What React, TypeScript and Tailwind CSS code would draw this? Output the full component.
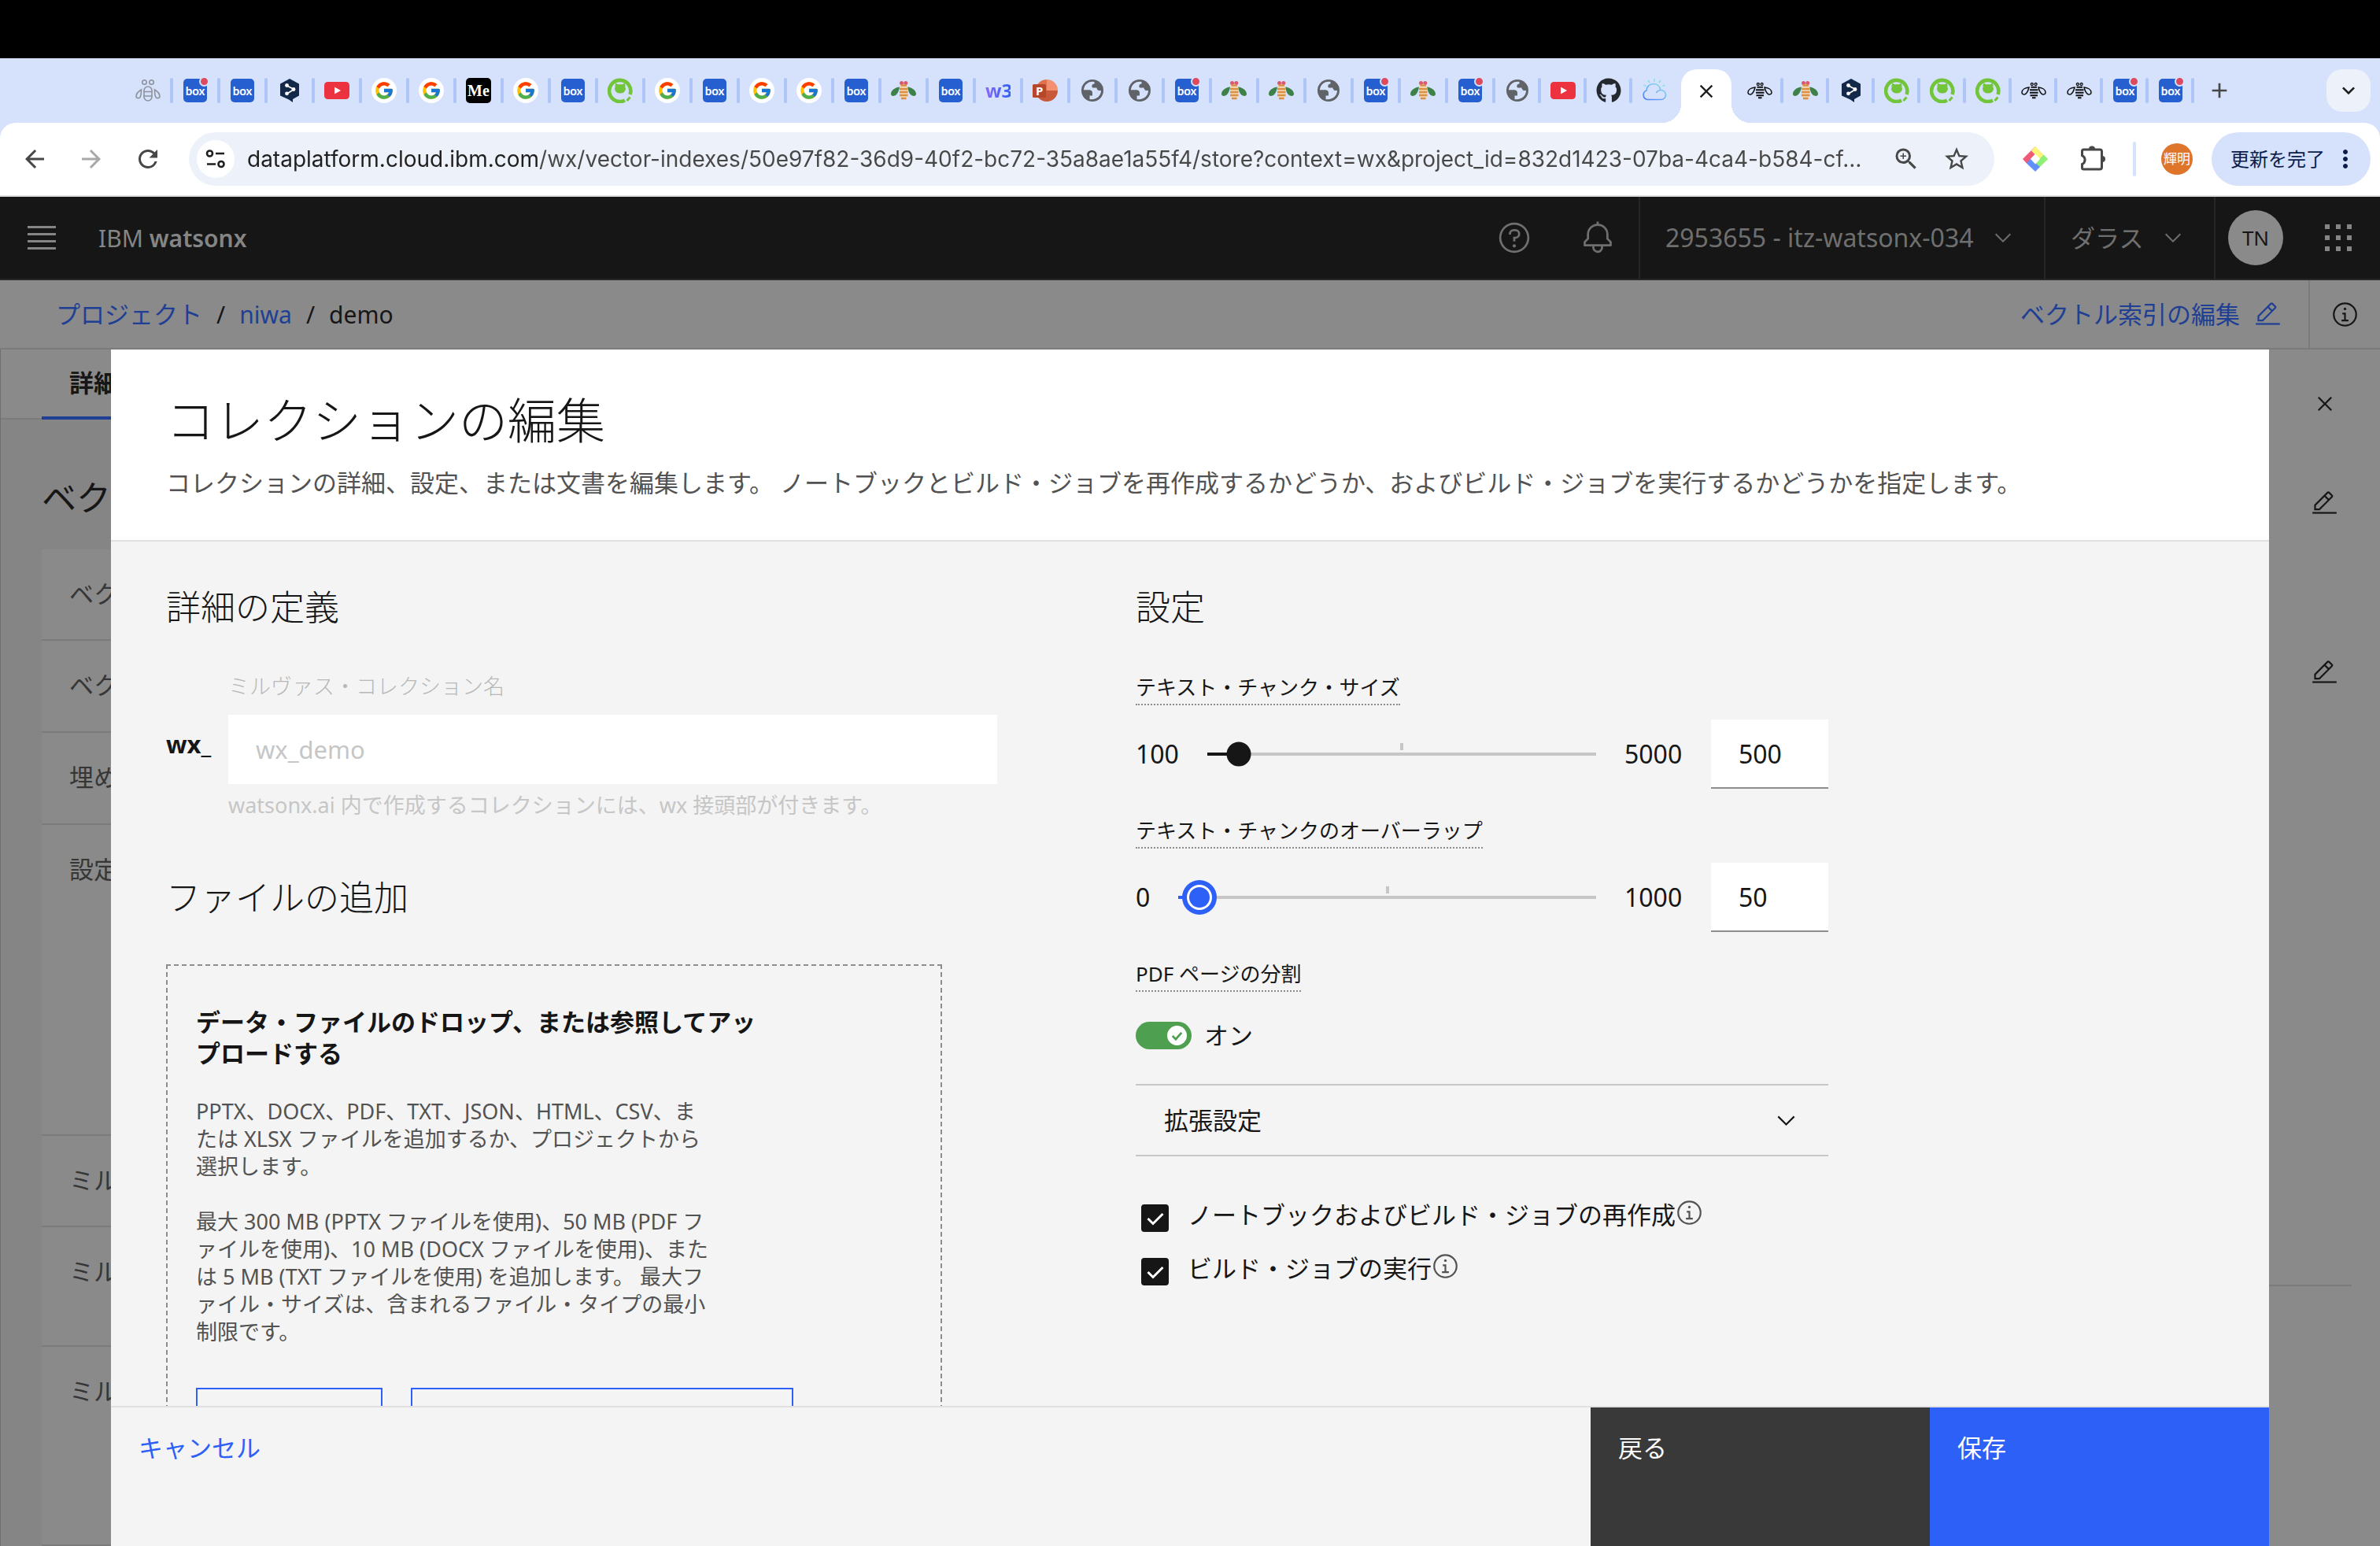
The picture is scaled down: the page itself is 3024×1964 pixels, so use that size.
import { useState, type ReactNode } from "react";
import { FaGithub } from "react-icons/fa";
import { FcGoogle } from "react-icons/fc";
import {
  MdAdd,
  MdArrowBack,
  MdArrowForward,
  MdClose,
  MdKeyboardArrowDown,
  MdMoreVert,
  MdRefresh,
  MdStarBorder,
  MdZoomIn,
} from "react-icons/md";

type Favicon =
  | "beeGray"
  | "beeColor"
  | "beeBlack"
  | "box"
  | "boxDot"
  | "deepl"
  | "youtube"
  | "google"
  | "medium"
  | "green"
  | "w3"
  | "ppt"
  | "globe"
  | "github"
  | "cloud";

const WIDE_TABS: Favicon[] = [
  "beeGray", "boxDot", "box", "deepl", "youtube", "google", "google", "medium",
  "google", "box", "green", "google", "box", "google", "google", "box",
  "beeColor", "box", "w3", "ppt", "globe", "globe", "boxDot", "beeColor",
  "beeColor", "globe", "boxDot", "beeColor", "boxDot",
];

const NARROW_TABS: Favicon[] = ["globe", "youtube", "github"];

const TRAILING_TABS: Favicon[] = [
  "beeBlack", "beeColor", "deepl", "green", "green", "green", "beeBlack",
  "beeBlack", "boxDot", "boxDot",
];

const URL_TEXT =
  "dataplatform.cloud.ibm.com/wx/vector-indexes/50e97f82-36d9-40f2-bc72-35a8ae1a55f4/store?context=wx&project_id=832d1423-07ba-4ca4-b584-cf…";

const DETAIL_ROWS = [
  { label: "ベクトル", height: "h-[116px]" },
  { label: "ベクトル", height: "h-[117px]" },
  { label: "埋め込み", height: "h-[117px]" },
  { label: "設定", height: "h-[395px]" },
  { label: "ミルヴァス", height: "h-[116px]" },
  { label: "ミルヴァス", height: "h-[152px]" },
  { label: "ミルヴァス", height: "flex-1" },
];

function Glyph({ className, children }: { className: string; children: ReactNode }) {
  return (
    <svg viewBox="0 0 32 32" fill="currentColor" aria-hidden="true" className={className}>
      {children}
    </svg>
  );
}

function EditIcon({ className }: { className: string }) {
  return (
    <Glyph className={className}>
      <path d="M2 26H30V28H2z" />
      <path d="M25.4 9c.8-.8.8-2 0-2.8l-3.6-3.6c-.8-.8-2-.8-2.8 0L4 17.6V24h6.4L25.4 9zM20.4 4L24 7.6l-3 3L17.4 7 20.4 4zM6 22v-3.6l10-10 3.6 3.6-10 10H6z" />
    </Glyph>
  );
}

function InfoIcon({ className }: { className: string }) {
  return (
    <Glyph className={className}>
      <path d="M17 22L17 14 13 14 13 16 15 16 15 22 12 22 12 24 20 24 20 22 17 22z" />
      <path d="M16 8a1.5 1.5 0 101.5 1.5A1.5 1.5 0 0016 8z" />
      <path d="M16 30A14 14 0 1130 16 14 14 0 0116 30zm0-26A12 12 0 1028 16 12 12 0 0016 4z" />
    </Glyph>
  );
}

function HelpIcon({ className }: { className: string }) {
  return (
    <Glyph className={className}>
      <path d="M16 2a14 14 0 1014 14A14 14 0 0016 2zm0 26a12 12 0 1112-12 12 12 0 01-12 12z" />
      <circle cx="16" cy="23.5" r="1.5" />
      <path d="M17 8H15.5A4.49 4.49 0 0011 12.5V13h2v-.5A2.5 2.5 0 0115.5 10H17a2.5 2.5 0 010 5H15v4.5h2V17a4.5 4.5 0 000-9z" />
    </Glyph>
  );
}

function BellIcon({ className }: { className: string }) {
  return (
    <Glyph className={className}>
      <path d="M28.707 19.293L26 16.586V13a10.014 10.014 0 00-9-9.95V1h-2v2.05A10.014 10.014 0 006 13v3.586l-2.707 2.707A1 1 0 003 20v3a1 1 0 001 1h7v.777a5.152 5.152 0 004.5 5.199A5.006 5.006 0 0021 25v-1h7a1 1 0 001-1v-3a1 1 0 00-.293-.707zM19 25a3 3 0 01-6 0v-1h6zm8-3H5v-1.586l2.707-2.707A1 1 0 008 17v-4a8 8 0 0116 0v4a1 1 0 00.293.707L27 20.414z" />
    </Glyph>
  );
}

function CloseIcon({ className }: { className: string }) {
  return (
    <Glyph className={className}>
      <path d="M24 9.4L22.6 8 16 14.6 9.4 8 8 9.4 14.6 16 8 22.6 9.4 24 16 17.4 22.6 24 24 22.6 17.4 16 24 9.4z" />
    </Glyph>
  );
}

function ChevronIcon({ className }: { className: string }) {
  return (
    <Glyph className={className}>
      <path d="M16 22L6 12 7.4 10.6 16 19.2 24.6 10.6 26 12z" />
    </Glyph>
  );
}

function BoxFavicon({ dot }: { dot?: boolean }) {
  return (
    <span className="relative flex size-8 items-center justify-center">
      <span className="flex size-[30px] items-center justify-center rounded-[5px] bg-[#2660d0] font-[Lato] text-[15px] leading-none font-bold text-white">
        box
      </span>
      {dot && (
        <span className="absolute -top-0.5 -right-0.5 box-content size-[9px] rounded-full border-2 border-[#d6e1fc] bg-[#dd4a5d]" />
      )}
    </span>
  );
}

function BeeColor() {
  return (
    <svg viewBox="0 0 32 32" className="size-8" aria-hidden="true">
      <path d="M11 11.5C5 12 0 16 0 20.500c0 2 2 2.800 4 2.300C8 22 10 17 11 11.500z" fill="#3d8048" />
      <path d="M21 11.500c6 .5 11 4.500 11 9 0 2-2 2.800-4 2.300-4-.8-6-5.800-7-11.300z" fill="#3d8048" />
      <circle cx="13.500" cy="6.500" r="2.500" fill="#e0566a" />
      <circle cx="18.800" cy="6.500" r="2.500" fill="#e0566a" />
      <rect x="11" y="8.500" width="10.500" height="18.500" rx="5" fill="#f3dcc0" />
      <path d="M12.500 9.500h7.500M11 14h10.500M11 18h10.500M11 22h10.500M13 26h6.500" stroke="#dc8f42" strokeWidth="2.400" />
    </svg>
  );
}

function BeeBlack() {
  return (
    <svg viewBox="0 0 32 32" className="size-8" fill="none" stroke="#111" aria-hidden="true">
      <circle cx="13.800" cy="8" r="1.500" strokeWidth="1.300" />
      <circle cx="18.600" cy="8" r="1.500" strokeWidth="1.300" />
      <path d="M10 12C5 12.500 1 15 1 18.500c0 2 2 2.800 4 2.200C7.500 19.500 9 16 10 12zM22 12c5 .5 9 3 9 6.500 0 2-2 2.800-4 2.200-2.500-1.200-4-4.700-5-8.700z" strokeWidth="1.500" />
      <path d="M12.500 11.800h7.500M11 15.300h10.500M11 18.800h10.500M11.500 22.300h9.500M14 25.300h4.500" strokeWidth="1.900" />
    </svg>
  );
}

function BeeGray() {
  return (
    <svg viewBox="0 0 32 32" className="size-8" fill="none" stroke="#8d929c" strokeWidth="1.600" aria-hidden="true">
      <circle cx="11.500" cy="5.500" r="2.700" />
      <circle cx="20.500" cy="5.500" r="2.700" />
      <rect x="11" y="11" width="10" height="18" rx="5" />
      <path d="M11 17.500h10M11 23h10" />
      <path d="M7.500 15C4 17 1 20.500 1 23.500 1 26 4 26 5.500 25c1.800-1.400 2-6 2-10zM24.500 15c3.500 2 6.500 5.500 6.500 8.500 0 2.500-3 2.500-4.500 1.500-1.800-1.400-2-6-2-10z" />
    </svg>
  );
}

function FaviconImage({ kind }: { kind: Favicon }) {
  switch (kind) {
    case "beeGray":
      return <BeeGray />;
    case "beeColor":
      return <BeeColor />;
    case "beeBlack":
      return <BeeBlack />;
    case "box":
      return <BoxFavicon />;
    case "boxDot":
      return <BoxFavicon dot />;
    case "deepl":
      return (
        <svg viewBox="0 0 32 32" className="size-8" aria-hidden="true">
          <path d="M16 1l12 6.500v15L20 27v4l-5-3.500L4 22.500v-15z" fill="#14294a" />
          <path d="M12 9.500l9.500 5-9.500 6" fill="none" stroke="#fff" strokeWidth="1.600" />
          <circle cx="12.500" cy="9.500" r="2.400" fill="#fff" />
          <circle cx="21" cy="14.500" r="2.400" fill="#fff" />
          <circle cx="12.500" cy="19.800" r="2.400" fill="#fff" />
        </svg>
      );
    case "youtube":
      return (
        <svg viewBox="0 0 32 32" className="size-8" aria-hidden="true">
          <rect y="5" width="32" height="22" rx="4.500" fill="#ec323e" />
          <path d="M13 11.500v9l8-4.500z" fill="#fff" />
        </svg>
      );
    case "google":
      return (
        <span className="flex size-8 items-center justify-center rounded-full bg-white">
          <FcGoogle className="size-[26px]" />
        </span>
      );
    case "medium":
      return (
        <span className="flex size-8 items-center justify-center rounded-[5px] bg-black font-['Liberation_Serif',serif] text-[20px] leading-8 font-bold text-white">
          Me
        </span>
      );
    case "green":
      return (
        <svg viewBox="0 0 32 32" className="size-8" aria-hidden="true">
          <path d="M22 28.500A13.600 13.600 0 1 1 28.500 21" fill="none" stroke="#72c53a" strokeWidth="4.600" />
          <path d="M24.500 29l4-4.500" stroke="#72c53a" strokeWidth="3" />
          <ellipse cx="16" cy="13.800" rx="7" ry="5.800" fill="#72c53a" />
          <path d="M9 11l1.500-4.500 4 2.500zM23 11l-1.500-4.500-4 2.500z" fill="#72c53a" />
        </svg>
      );
    case "w3":
      return (
        <span className="w-8 bg-[linear-gradient(90deg,#8a66fb,#2f62f4)] bg-clip-text text-center font-['Noto_Sans',sans-serif] text-[24px] leading-8 font-bold text-transparent">
          w3
        </span>
      );
    case "ppt":
      return (
        <svg viewBox="0 0 32 32" className="size-8" aria-hidden="true">
          <path d="M18 2a14 14 0 0 0-14 14h14z" fill="#e0714d" />
          <path d="M18 2a14 14 0 0 1 14 14H18z" fill="#f2906f" />
          <path d="M4 16a14 14 0 0 0 28 0z" fill="#c8583a" />
          <rect x="0" y="8" width="17" height="17" rx="1.500" fill="#b7472a" />
          <text x="4" y="22" fill="#fff" fontSize="15" fontWeight="700" fontFamily="Open Sans">
            P
          </text>
        </svg>
      );
    case "globe":
      return (
        <svg viewBox="0 0 32 32" className="size-8" aria-hidden="true">
          <circle cx="16" cy="16" r="14" fill="#5f6368" />
          <path d="M18.500 5C11 3.500 5 9 5 15.500h6.500c3 0 3.500 1.500 4 4H20c.500-2.500 2-3 4.500-3.500-2-.5-3-1.500-3-3.500h-4.500c-1.500 0-2-1-1.500-3 .5-1.200 1-2 3-2z" fill="#d6e1fc" />
          <path d="M5.500 15.500h6.500c3 0 4 1.500 4 4l-3.500 2.500v3.500C8 24 5.500 20 5.500 15.500z" fill="#5f6368" />
          <path d="M12.500 22.500h3.500V19h4c0-2.500 2.500-3.500 7-3 0 7-6.500 12.500-14.500 11z" fill="#d6e1fc" />
        </svg>
      );
    case "github":
      return <FaGithub className="size-8 text-[#24292f]" />;
    case "cloud":
      return (
        <svg viewBox="0 0 32 32" className="size-8" fill="none" strokeWidth="1.600" aria-hidden="true">
          <defs>
            <linearGradient id="cloud" x1="0" y1="1" x2="1" y2="0">
              <stop offset="0" stopColor="#4b7cf8" />
              <stop offset="1" stopColor="#8fe6ea" />
            </linearGradient>
          </defs>
          <path d="M7 27.500h17.500a6 6 0 0 0 0-12c-3 0-5 1.500-6 3.500M7 27.500a6 6 0 0 1-1-11.500c0-5 4-8.500 9-8.500 4.500 0 8 3 8.800 7.500" stroke="url(#cloud)" />
          <path d="M16 1v3.500M8 3l2 3.200M24 3l-2 3.200M2.500 9l3 1.600M29.500 9l-3 1.600" stroke="#86dfe8" />
        </svg>
      );
  }
}

function TabStrip() {
  return (
    <div className="flex h-[82px] items-center bg-[#d6e1fc] pl-[172px]">
      {WIDE_TABS.map((kind, i) => (
        <div key={i} className="flex shrink-0 items-center">
          <span className="flex size-8 items-center justify-center">
            <FaviconImage kind={kind} />
          </span>
          <span className="mx-3 h-8 w-1 rounded-sm bg-[#adc6f7]" />
        </div>
      ))}
      {NARROW_TABS.map((kind, i) => (
        <div key={i} className="flex shrink-0 items-center">
          <span className="flex size-8 items-center justify-center">
            <FaviconImage kind={kind} />
          </span>
          <span className="mr-3 ml-2.5 h-8 w-1 rounded-sm bg-[#adc6f7]" />
        </div>
      ))}
      <FaviconImage kind="cloud" />
      <div className="relative mr-5 ml-[18px] flex h-[68px] w-16 shrink-0 items-center justify-center self-end rounded-t-[20px] bg-white pb-3">
        <span className="absolute bottom-0 -left-6 size-6 bg-[radial-gradient(circle_at_0_0,#d6e1fc_24px,#fff_24px)]" />
        <span className="absolute -right-6 bottom-0 size-6 bg-[radial-gradient(circle_at_100%_0,#d6e1fc_24px,#fff_24px)]" />
        <button type="button" aria-label="タブを閉じる">
          <MdClose className="size-7 text-[#1f1f1f]" />
        </button>
      </div>
      {TRAILING_TABS.map((kind, i) => (
        <div key={i} className="relative flex shrink-0 items-center">
          <FaviconImage kind={kind} />
          <span className="mr-3 ml-2.5 h-8 w-1 rounded-sm bg-[#adc6f7]" />
        </div>
      ))}
      <button type="button" aria-label="新しいタブ" className="flex w-10 justify-center">
        <MdAdd className="size-8 text-[#474747]" />
      </button>
      <button
        type="button"
        aria-label="タブを検索"
        className="mr-3 ml-auto flex h-[54px] w-14 items-center justify-center rounded-[20px] bg-[#edf2fa]"
      >
        <MdKeyboardArrowDown className="size-8 text-[#1f1f1f]" />
      </button>
    </div>
  );
}

function BrowserToolbar() {
  return (
    <div className="bg-[#d6e1fc]">
      <div className="flex h-[94px] items-center rounded-t-[20px] border-b-2 border-[#dcdddf] bg-white pr-3 pl-5">
        <div className="flex gap-6">
          <button type="button" aria-label="戻る" className="flex size-12 items-center justify-center">
            <MdArrowBack className="size-9 text-[#474747]" />
          </button>
          <button type="button" aria-label="進む" className="flex size-12 items-center justify-center">
            <MdArrowForward className="size-9 text-[#a9a9a9]" />
          </button>
          <button type="button" aria-label="再読み込み" className="flex size-12 items-center justify-center">
            <MdRefresh className="size-9 text-[#474747]" />
          </button>
        </div>
        <div className="ml-7 flex h-[68px] flex-1 items-center rounded-full bg-[#edf2fa] pr-6 pl-2.5">
          <button
            type="button"
            aria-label="サイト情報"
            className="flex size-12 items-center justify-center rounded-full bg-white"
          >
            <svg viewBox="0 0 26 26" className="size-[26px]" fill="none" stroke="#1f1f1f" strokeWidth="2.600" aria-hidden="true">
              <circle cx="5.500" cy="6" r="3.500" />
              <circle cx="20" cy="19.500" r="3.500" />
              <path d="M13 6h11M2 19.500h11" />
            </svg>
          </button>
          <input
            aria-label="アドレス"
            defaultValue={URL_TEXT}
            className="ml-4 min-w-0 flex-1 bg-[linear-gradient(90deg,#1f1f1f_370px,#474747_370px)] bg-clip-text font-[Inter,sans-serif] text-[28px] text-transparent outline-none"
          />
          <button type="button" aria-label="ズーム" className="flex size-12 items-center justify-center">
            <MdZoomIn className="size-9 text-[#474747]" />
          </button>
          <button type="button" aria-label="ブックマーク" className="ml-4 flex size-12 items-center justify-center">
            <MdStarBorder className="size-9 text-[#474747]" />
          </button>
        </div>
        <svg viewBox="0 0 32 32" className="ml-9 size-8" aria-hidden="true">
          <path d="M0 16L16 0v10l-6 6 3 4-8 1.500z" fill="#f05a76" />
          <path d="M16 0l16 16-5.500 5.500L11 5.500z" fill="#fdf579" />
          <path d="M32 16L21.500 26.500 16 22l10.500-11.500z" fill="#8ff078" />
          <path d="M5 21.500L10 15.500 22 26 16 32z" fill="#6290fb" />
          <path d="M16 9.500l6 6.500-6 6.500-6-6.500z" fill="#fff" />
        </svg>
        <button type="button" aria-label="拡張機能" className="ml-[38px]">
          <svg viewBox="0 0 40 40" className="size-10 text-[#474747]" aria-hidden="true">
            <path
              d="M7.500 8h20.500a2.500 2.500 0 0 1 2.500 2.500v20a2.500 2.500 0 0 1-2.500 2.500H7.500A2 2 0 0 1 5.500 31v-4.500a6 6 0 0 0 0-11V10a2 2 0 0 1 2-2z"
              fill="none"
              stroke="currentColor"
              strokeWidth="3"
            />
            <path d="M14 7.500a4 4 0 0 1 8 0zM31 16a4 4 0 0 1 0 8z" fill="currentColor" />
          </svg>
        </button>
        <span className="ml-[30px] h-11 w-1 rounded-sm bg-[#d6e1fc]" />
        <button
          type="button"
          className="ml-8 flex size-10 items-center justify-center rounded-full bg-[#df742b] text-[17px] text-white"
        >
          輝明
        </button>
        <button
          type="button"
          className="ml-6 flex h-[68px] w-[202px] items-center rounded-full bg-[#d6e1fc] pl-6 text-[24px] text-[#0b1c4a]"
        >
          更新を完了
          <MdMoreVert className="ml-2 size-9" />
        </button>
      </div>
    </div>
  );
}

function AppHeader() {
  return (
    <header className="flex h-[106px] items-center border-b-2 border-[#262626] bg-[#161616] text-[31px] text-[#6f6f6f]">
      <button type="button" aria-label="メニュー" className="ml-[35px] flex w-9 flex-col gap-[6px]">
        <span className="h-[3px] bg-[#858585]" />
        <span className="h-[3px] bg-[#858585]" />
        <span className="h-[3px] bg-[#858585]" />
        <span className="h-[3px] bg-[#858585]" />
      </button>
      <a href="#home" className="ml-[54px] text-[30px] text-[#858585]">
        IBM <strong className="font-semibold">watsonx</strong>
      </a>
      <button type="button" aria-label="ヘルプ" className="ml-auto">
        <HelpIcon className="size-[44px]" />
      </button>
      <button type="button" aria-label="通知" className="ml-[62px]">
        <BellIcon className="size-[44px]" />
      </button>
      <button
        type="button"
        className="ml-[30px] flex h-full w-[515px] items-center justify-between border-l-2 border-[#262626] pr-9 pl-8 text-[32px]"
      >
        2953655 - itz-watsonx-034
        <ChevronIcon className="size-8" />
      </button>
      <button
        type="button"
        className="flex h-full w-[218px] items-center justify-between border-x-2 border-[#262626] pr-9 pl-8"
      >
        ダラス
        <ChevronIcon className="size-8" />
      </button>
      <button
        type="button"
        className="ml-4 flex size-[70px] items-center justify-center rounded-full bg-[#8a8a8a] text-[26px] text-[#161616]"
      >
        TN
      </button>
      <button type="button" aria-label="アプリ" className="mr-9 ml-[53px] grid grid-cols-3 gap-2 text-[#858585]">
        {Array.from({ length: 9 }, (_, i) => (
          <span key={i} className="size-[6px] bg-current" />
        ))}
      </button>
    </header>
  );
}

function Breadcrumb() {
  return (
    <nav className="flex h-[88px] items-center border-b-2 border-[#7b7b7b] bg-[#8a8a8a] pl-[71px] text-[31px] text-[#161616]">
      <a href="#projects" className="text-[#1f3f94]">
        プロジェクト
      </a>
      <span className="mx-[18px] text-[30px]">/</span>
      <a href="#niwa" className="text-[30px] text-[#1f3f94]">
        niwa
      </a>
      <span className="mx-[18px] text-[30px]">/</span>
      <span className="text-[30px]">demo</span>
      <a href="#edit" className="ml-auto flex items-center gap-[18px] text-[#1f3f94]">
        ベクトル索引の編集
        <EditIcon className="size-[35px]" />
      </a>
      <button
        type="button"
        aria-label="情報"
        className="ml-[34px] flex h-full w-[91px] items-center justify-center border-l-2 border-[#7b7b7b]"
      >
        <InfoIcon className="size-[35px]" />
      </button>
    </nav>
  );
}

function PageBackdrop() {
  return (
    <div className="flex flex-1 overflow-hidden border-l border-[#6f6f6f] bg-[#858585] text-[#161616]">
      <div className="flex flex-1 flex-col">
        <div className="flex h-[89px] border-b-2 border-[#7b7b7b] bg-[#8a8a8a] pl-13">
          <button
            type="button"
            className="box-content flex h-[85px] items-center border-b-4 border-[#1f3f94] px-[35px] text-[31px] font-bold"
          >
            詳細
          </button>
        </div>
        <h2 className="mt-[66px] ml-[52px] text-[44px] leading-[66px]">ベクトル</h2>
        <div className="mt-[33px] ml-13 flex flex-1 flex-col bg-[#8a8a8a] text-[31px] leading-9 text-[#363636]">
          {DETAIL_ROWS.map((row, i) => (
            <div key={i} className={`${row.height} border-b-2 border-[#7b7b7b] px-[35px] pt-[38px]`}>
              {row.label}
            </div>
          ))}
        </div>
      </div>
      <aside className="flex w-[141px] flex-col items-center bg-[#8a8a8a]">
        <button type="button" aria-label="閉じる" className="mt-[51px]">
          <CloseIcon className="size-9" />
        </button>
        <button type="button" aria-label="名前を編集" className="mt-[91px]">
          <EditIcon className="size-[35px]" />
        </button>
        <button type="button" aria-label="説明を編集" className="mt-[180px]">
          <EditIcon className="size-[35px]" />
        </button>
        <span className="mt-[760px] mr-9 h-0.5 w-[105px] bg-[#7b7b7b]" />
      </aside>
    </div>
  );
}

interface SliderFieldProps {
  id: string;
  label: string;
  min: number;
  max: number;
  initial: number;
  focused?: boolean;
}

function SliderField({ id, label, min, max, initial, focused }: SliderFieldProps) {
  const [value, setValue] = useState(initial);
  const percent = ((value - min) / (max - min)) * 100;

  return (
    <div className="flex flex-col items-start">
      <label
        htmlFor={id}
        className="border-b-2 border-dotted border-[#8d8d8d] text-[26px] leading-[42px]"
      >
        {label}
      </label>
      <div className="mt-[18px] flex w-full items-center text-[32px]">
        <span>{min}</span>
        <div className="relative mx-9 h-1 flex-1 bg-[#c6c6c6]">
          <div
            className={`h-full ${focused ? "bg-[#2d60f6]" : "bg-[#161616]"}`}
            style={{ width: `${percent}%` }}
          />
          <span className="absolute -top-3 left-1/2 h-[9px] w-1 -translate-x-1/2 bg-[#c6c6c6]" />
          <span
            className={
              focused
                ? "absolute top-1/2 flex size-[44px] -translate-1/2 items-center justify-center rounded-full bg-[#2d60f6]"
                : "absolute top-1/2 size-[31px] -translate-1/2 rounded-full bg-[#161616]"
            }
            style={{ left: `${percent}%` }}
          >
            {focused && <span className="size-8 rounded-full border-[3px] border-white" />}
          </span>
          <input
            id={id}
            type="range"
            min={min}
            max={max}
            value={value}
            onChange={(event) => setValue(Number(event.target.value))}
            className="absolute inset-x-0 -top-5 h-11 w-full cursor-pointer opacity-0"
          />
        </div>
        <span className="w-[74px]">{max}</span>
        <input
          type="text"
          aria-label={`${label}の値`}
          value={value}
          onChange={(event) => setValue(Number(event.target.value) || 0)}
          className="ml-9 h-[88px] w-[149px] border-b-2 border-[#8d8d8d] bg-white px-[35px] outline-none"
        />
      </div>
    </div>
  );
}

function CheckRow({ id, label }: { id: string; label: string }) {
  return (
    <div className="flex h-[68px] items-start">
      <span className="relative mt-[7px] ml-[7px] flex size-[35px] items-center justify-center">
        <input
          id={id}
          type="checkbox"
          defaultChecked
          className="peer absolute inset-0 appearance-none rounded-[4px] border-2 border-[#161616] checked:bg-[#161616]"
        />
        <svg viewBox="0 0 24 24" className="relative hidden size-6 peer-checked:block" fill="none" stroke="#fff" strokeWidth="3" aria-hidden="true">
          <path d="M2.500 12l6.500 6.500L21.500 6" />
        </svg>
      </span>
      <label htmlFor={id} className="ml-6 text-[31px] leading-10">
        {label}
      </label>
      <InfoIcon className="size-[35px] text-[#525252]" />
    </div>
  );
}

function DetailsColumn() {
  return (
    <section>
      <h3 className="text-[44px] leading-[62px] font-light">詳細の定義</h3>
      <div className="mt-[51px] grid grid-cols-[79px_1fr]">
        <label htmlFor="collection" className="col-start-2 text-[27px] leading-[38px] font-light text-[#b8b8b8]">
          ミルヴァス・コレクション名
        </label>
        <span className="col-start-1 mt-[17px] pt-3 text-[31px] leading-[50px] font-bold">wx_</span>
        <input
          id="collection"
          disabled
          placeholder="wx_demo"
          className="mt-[17px] h-[88px] bg-white px-[35px] text-[31px] placeholder:text-[#c6c6c6]"
        />
        <p className="col-start-2 mt-2 text-[27px] leading-[38px] text-[#c6c6c6]">
          watsonx.ai 内で作成するコレクションには、wx 接頭部が付きます。
        </p>
      </div>
      <h3 className="mt-[67px] text-[44px] leading-[62px] font-light">ファイルの追加</h3>
      <div className="mt-[54px] mr-[70px] border-2 border-dashed border-[#8d8d8d] px-9 pt-[51px] pb-12">
        <p className="text-[31px] leading-10 font-bold">
          データ・ファイルのドロップ、または参照してアッ
          <br />
          プロードする
        </p>
        <p className="mt-9 text-[27px] leading-[35px] text-[#525252]">
          PPTX、DOCX、PDF、TXT、JSON、HTML、CSV、ま
          <br />
          たは XLSX ファイルを追加するか、プロジェクトから
          <br />
          選択します。
        </p>
        <p className="mt-[35px] text-[27px] leading-[35px] text-[#525252]">
          最大 300 MB (PPTX ファイルを使用)、50 MB (PDF フ
          <br />
          ァイルを使用)、10 MB (DOCX ファイルを使用)、また
          <br />
          は 5 MB (TXT ファイルを使用) を追加します。 最大フ
          <br />
          ァイル・サイズは、含まれるファイル・タイプの最小
          <br />
          制限です。
        </p>
        <div className="mt-[54px] flex gap-9">
          <button type="button" aria-label="参照" className="h-[88px] w-[237px] border-2 border-[#2d60f6]" />
          <button type="button" aria-label="プロジェクトから選択" className="h-[88px] w-[486px] border-2 border-[#2d60f6]" />
        </div>
      </div>
    </section>
  );
}

function SettingsColumn() {
  return (
    <section className="max-w-[880px]">
      <h3 className="text-[44px] leading-[62px] font-light">設定</h3>
      <div className="mt-[50px] flex flex-col gap-8">
        <SliderField id="chunk" label="テキスト・チャンク・サイズ" min={100} max={5000} initial={500} />
        <SliderField id="overlap" label="テキスト・チャンクのオーバーラップ" min={0} max={1000} initial={50} focused />
        <div className="flex flex-col items-start">
          <label
            htmlFor="split"
            className="border-b-2 border-dotted border-[#8d8d8d] text-[26px] leading-[42px]"
          >
            PDF ページの分割
          </label>
          <div className="mt-[34px] flex items-center gap-4 text-[31px] leading-[42px]">
            <span className="relative h-[35px] w-[71px]">
              <input
                id="split"
                type="checkbox"
                role="switch"
                defaultChecked
                className="absolute inset-0 appearance-none rounded-full bg-[#8d8d8d] checked:bg-[#4f9f50]"
              />
              <svg viewBox="0 0 24 24" className="pointer-events-none absolute top-[5px] right-1.5 size-[25px]" aria-hidden="true">
                <circle cx="12" cy="12" r="12" fill="#fff" />
                <path d="M6.500 12.500l4 4 7-8" fill="none" stroke="#4f9f50" strokeWidth="2.600" />
              </svg>
            </span>
            オン
          </div>
        </div>
      </div>
      <button
        type="button"
        className="mt-[41px] flex h-[92px] w-full items-center justify-between border-y-2 border-[#c6c6c6] pr-9 pl-9 text-[31px]"
      >
        拡張設定
        <ChevronIcon className="size-[35px]" />
      </button>
      <div className="mt-[54px]">
        <CheckRow id="rebuild" label="ノートブックおよびビルド・ジョブの再作成" />
        <CheckRow id="run" label="ビルド・ジョブの実行" />
      </div>
    </section>
  );
}

function EditCollectionDialog() {
  return (
    <div
      role="dialog"
      aria-labelledby="dialog-title"
      className="absolute inset-x-[141px] top-[88px] bottom-0 flex flex-col bg-[#f4f4f4] text-[#161616]"
    >
      <div className="h-[244px] border-b-2 border-[#e0e0e0] bg-white px-[70px] pt-[50px]">
        <h1 id="dialog-title" className="text-[62px] leading-[80px] font-light">
          コレクションの編集
        </h1>
        <p className="mt-[18px] text-[31px] leading-[42px] text-[#525252]">
          コレクションの詳細、設定、または文書を編集します。 ノートブックとビルド・ジョブを再作成するかどうか、およびビルド・ジョブを実行するかどうかを指定します。
        </p>
      </div>
      <div className="grid min-h-0 flex-1 grid-cols-2 gap-x-44 overflow-hidden pt-[52px] pr-[384px] pl-[70px]">
        <DetailsColumn />
        <SettingsColumn />
      </div>
      <div className="flex h-[178px] items-stretch border-t-2 border-[#e0e0e0] text-[31px] leading-[42px]">
        <button type="button" className="flex flex-1 items-start px-[35px] pt-[30px] text-[#2d60f6]">
          キャンセル
        </button>
        <button type="button" className="flex w-[431px] items-start bg-[#393939] px-[35px] pt-[30px] text-white">
          戻る
        </button>
        <button type="button" className="flex w-[431px] items-start bg-[#2d60f6] px-[35px] pt-[30px] text-white">
          保存
        </button>
      </div>
    </div>
  );
}

export default function App() {
  return (
    <div
      lang="ja"
      className="flex h-screen flex-col overflow-hidden bg-black pt-[74px] font-['Noto_Sans','Noto_Sans_CJK_JP',sans-serif] whitespace-nowrap"
    >
      <TabStrip />
      <BrowserToolbar />
      <AppHeader />
      <main className="relative flex min-h-0 flex-1 flex-col">
        <Breadcrumb />
        <PageBackdrop />
        <EditCollectionDialog />
      </main>
    </div>
  );
}
